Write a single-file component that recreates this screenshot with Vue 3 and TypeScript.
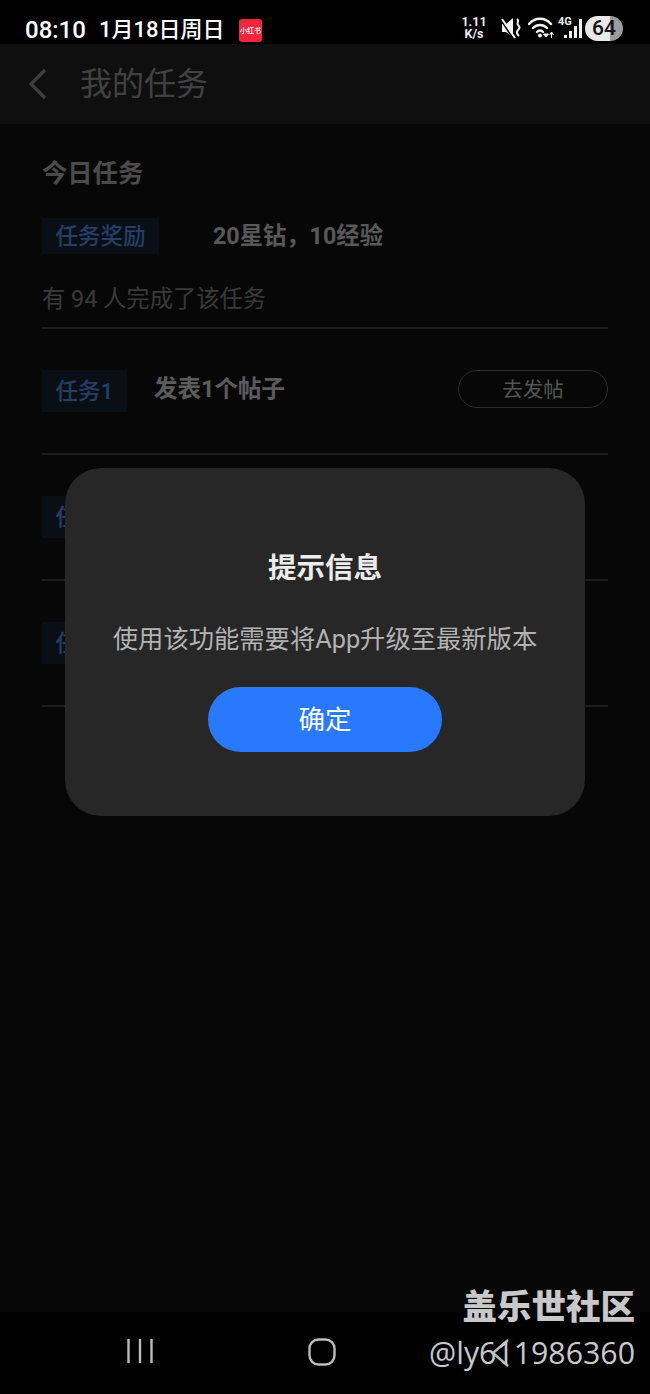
<script setup lang="ts">
interface Task { label: string; text?: string; action?: string }
const tasks: Task[] = [
  { label: '任务1', text: '发表1个帖子', action: '去发帖' },
  { label: '任务2' },
  { label: '任务3' },
]
</script>

<template>
  <div class="screen">
    <div class="status">
      <div class="status-left">
        <span class="clock">08:10</span>
        <span class="date">1月18日周日</span>
        <span class="app-badge">小红书</span>
      </div>
      <div class="status-right">
        <span class="speed">1.11<br />K/s</span>
        <svg class="mute" width="20" height="24" viewBox="0 0 20 24">
          <path d="M1 8h4l7-6v19l-7-5H1z" fill="#f2f2f2" />
          <path d="M0 4l12 18" stroke="#000" stroke-width="2" />
          <path d="M1 3l13 19" stroke="#f2f2f2" stroke-width="2" />
          <path d="M16 3c3 2-1 4 1 6s2 3 0 5-1 4 1 6" fill="none" stroke="#f2f2f2" stroke-width="2" />
        </svg>
        <svg class="wifi" width="26" height="24" viewBox="0 0 26 24">
          <g fill="none" stroke="#f2f2f2" stroke-width="2.400" stroke-linecap="round">
            <path d="M1 8c6-7 16-7 22 0" />
            <path d="M5 12c4-4 10-4 14 0" />
            <path d="M9 16c2-2 4-2 6 0" />
          </g>
          <circle cx="12" cy="19.500" r="2" fill="#f2f2f2" />
          <path d="M15.500 18l2.500 3 2.500-3zM23.500 22v-5M21.500 18.500l2-2.500 2 2.500" fill="#f2f2f2" stroke="#f2f2f2" stroke-width="1" />
        </svg>
        <div class="signal">
          <span class="net">4G</span>
          <svg width="18" height="24" viewBox="0 0 18 24">
            <g fill="#f2f2f2">
              <rect x="0" y="19" width="3" height="3" />
              <rect x="5" y="15" width="3" height="7" />
              <rect x="10" y="10" width="3" height="12" />
              <rect x="15" y="3" width="3" height="19" />
            </g>
          </svg>
        </div>
        <div class="battery"><span>64</span></div>
      </div>
    </div>

    <header class="topbar">
      <svg class="back" width="22" height="34" viewBox="0 0 22 34">
        <path d="M18 3L4 17l14 14" fill="none" stroke="#9c9c9c" stroke-width="3.200" />
      </svg>
      <h1>我的任务</h1>
    </header>

    <main class="content">
      <h2>今日任务</h2>
      <div class="reward">
        <span class="tag tag-wide"><span>任务奖励</span></span>
        <strong>20星钻，10经验</strong>
      </div>
      <p class="count">有 94 人完成了该任务</p>

      <div v-for="task in tasks" :key="task.label" class="task">
        <span class="tag"><span>{{ task.label }}</span></span>
        <span v-if="task.text" class="task-text">{{ task.text }}</span>
        <button v-if="task.action" class="go">{{ task.action }}</button>
      </div>
    </main>

    <nav class="navbar">
      <svg width="28" height="26" viewBox="0 0 28 26">
        <path d="M2.500 1v24M14 1v24M25.500 1v24" stroke="#bbb" stroke-width="2.400" />
      </svg>
      <svg width="28" height="28" viewBox="0 0 28 28">
        <rect x="1.500" y="1.500" width="25" height="25" rx="9" fill="none" stroke="#bbb" stroke-width="2.400" />
      </svg>
      <svg width="20" height="30" viewBox="0 0 20 30">
        <path d="M18 2L3 15l15 13" fill="none" stroke="#bbb" stroke-width="2.400" />
      </svg>
    </nav>

    <div class="scrim"></div>

    <section class="dialog">
      <h3>提示信息</h3>
      <p>使用该功能需要将App升级至最新版本</p>
      <button class="ok">确定</button>
    </section>

    <div class="watermark">
      <div class="wm-title">盖乐世社区</div>
      <div class="wm-user">@ly611986360</div>
    </div>
  </div>
</template>

<style>
html, body { margin: 0; background: #000; }
</style>

<style scoped>
.screen {
  position: relative;
  width: 650px;
  height: 1394px;
  overflow: hidden;
  display: flex;
  flex-direction: column;
  background: #121212;
  font-family: Roboto, "Noto Sans CJK SC", sans-serif;
  color: #ddd;
}
.status {
  position: relative;
  z-index: 3;
  height: 44px;
  flex: none;
  background: #000;
  display: flex;
  align-items: center;
  justify-content: space-between;
  padding: 0 27px 0 25px;
  box-sizing: border-box;
}
.status-left { display: flex; align-items: center; color: #fff; font-weight: 500; height: 44px; padding-top: 16px; box-sizing: border-box; }
.clock { width: 74px; font-size: 24px; line-height: 28px; }
.date { width: 140px; font-size: 22px; line-height: 28px; height: 28px; }
.app-badge {
  width: 23px;
  height: 23px;
  border-radius: 3px;
  background: #f0263f;
  color: #fff;
  font-size: 7px;
  display: flex;
  align-items: center;
  justify-content: center;
  white-space: nowrap;
}
.status-right { display: flex; align-items: center; padding-top: 12px; }
.speed { width: 26px; margin-right: 14px; font-size: 12.500px; line-height: 12.500px; font-weight: 700; text-align: center; color: #eee; }
.mute { margin-right: 7px; }
.wifi { margin-right: 4px; }
.signal { position: relative; width: 24px; height: 24px; margin-right: 3px; }
.signal svg { position: absolute; right: 0; top: 0; }
.net { position: absolute; left: 0; top: 0; font-size: 11px; font-weight: 700; color: #eee; line-height: 11px; }
.battery {
  width: 38px;
  height: 25px;
  border-radius: 13px;
  background: linear-gradient(90deg, #e8e8e8 66%, #9b9b9b 66%);
  display: flex;
  align-items: center;
  justify-content: center;
  color: #111;
  font-size: 21px;
  font-weight: 500;
}

.topbar {
  height: 80px;
  flex: none;
  background: #262626;
  display: flex;
  align-items: center;
  padding-left: 27px;
  box-sizing: border-box;
}
.back { margin-right: 31px; }
.topbar h1 { margin: -6px 0 0; font-size: 32px; font-weight: 400; color: #a4a4a4; }

.content { flex: 1; padding: 0 42px; }
.content h2 { margin: 32px 0 0; height: 34px; line-height: 34px; font-size: 25.300px; font-weight: 700; color: #bcbcbc; transform: translateY(1px); }
.reward { display: flex; align-items: center; margin-top: 28px; }
.reward strong { margin-left: 54px; height: 36px; line-height: 36px; font-size: 23.300px; font-weight: 700; color: #dcdcdc; }
.tag {
  flex: none;
  box-sizing: border-box;
  height: 42px;
  width: 85px;
  display: flex;
  align-items: center;
  justify-content: center;
  padding-bottom: 4px;
  background: #1b2636;
  color: #5c9cff;
  font-size: 22.500px;
  font-weight: 500;
}
.tag-wide { width: 117px; height: 36px; padding-bottom: 5px; }
.count { margin: 28px 0 0; height: 33px; line-height: 34px; font-size: 23.300px; color: #8f8f8f; border-bottom: 2px solid #464646; padding-bottom: 12px; }
.task {
  height: 124px;
  display: flex;
  align-items: flex-start;
  border-bottom: 2px solid #464646;
}
.task > .tag { margin-top: 41px; }
.task-text { margin: 44px 0 0 27px; font-size: 23.500px; line-height: 32px; font-weight: 700; color: #e4e4e4; }
.go {
  margin: 41px 0 0 auto;
  width: 150px;
  height: 38px;
  border: 1.500px solid #6e6e6e;
  border-radius: 19px;
  background: transparent;
  color: #d0d0d0;
  font: 400 20.500px Roboto, "Noto Sans CJK SC", sans-serif;
  padding: 0 0 3px;
}

.navbar {
  height: 82px;
  flex: none;
  background: #000;
  display: flex;
  align-items: flex-start;
  padding-top: 26px;
  box-sizing: border-box;
  position: relative;
  z-index: 3;
  gap: 154px;
  padding-left: 126px;
}

.scrim { position: absolute; inset: 0; background: rgba(0, 0, 0, 0.6); z-index: 1; }

.dialog {
  position: absolute;
  z-index: 2;
  left: 65px;
  top: 468px;
  width: 520px;
  height: 348px;
  box-sizing: border-box;
  border-radius: 36px;
  background: #272727;
  display: flex;
  flex-direction: column;
  align-items: center;
  padding-top: 80px;
}
.dialog h3 { margin: 0; height: 42px; line-height: 42px; font-size: 28.500px; font-weight: 700; color: #ececec; }
.dialog p { margin: 33px 0 0; height: 34px; line-height: 34px; font-size: 25.300px; color: #b3b3b3; white-space: nowrap; }
.ok {
  margin-top: 30px;
  width: 234px;
  height: 65px;
  border: 0;
  border-radius: 33px;
  background: #2979ff;
  color: #fff;
  font: 400 26.500px Roboto, "Noto Sans CJK SC", sans-serif;
  padding: 0 0 5px;
}

.watermark {
  position: absolute;
  z-index: 4;
  right: 15px;
  top: 1284px;
  text-align: right;
  color: #c8c8c8;
  pointer-events: none;
}
.wm-title { font-size: 34.500px; font-weight: 900; line-height: 46px; height: 46px; }
.wm-user { font-family: "Open Sans", sans-serif; font-size: 30.300px; line-height: 46px; }
</style>
